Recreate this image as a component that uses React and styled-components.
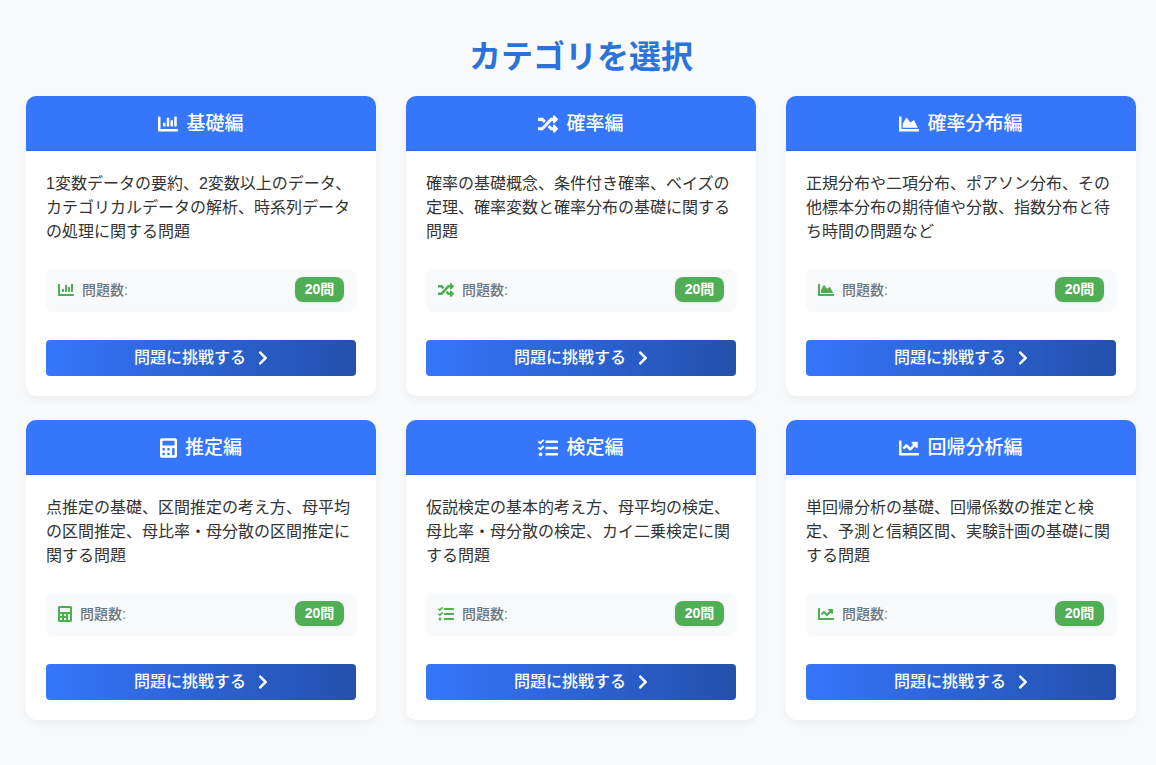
import styled, { createGlobalStyle } from 'styled-components';
import {
    FaCalculator,
    FaChartArea,
    FaChartBar,
    FaChartLine,
    FaChevronRight,
    FaRandom,
    FaTasks,
} from 'react-icons/fa';

const GlobalStyle = createGlobalStyle`
    * {
        box-sizing: border-box;
    }
    body {
        margin: 0;
        background: #f8fafc;
        color: #333;
        font-family: "Liberation Sans", "Noto Sans CJK JP", sans-serif;
        font-size: 16px;
        line-height: 24px;
    }
`;

const Page = styled.main`
    padding: 37px 20px 44px 26px;
`;

const Title = styled.h1`
    margin: 0 0 19px;
    color: #2c73d9;
    font-size: 32px;
    font-weight: 700;
    line-height: 40px;
    text-align: center;
`;

const Grid = styled.div`
    display: grid;
    grid-template-columns: repeat(3, 1fr);
    gap: 24px 30px;
    @media (max-width: 900px) {
        grid-template-columns: 1fr;
    }
`;

const Card = styled.article`
    display: flex;
    flex-direction: column;
    overflow: hidden;
    background: #fff;
    border-radius: 10px;
    box-shadow: 0 4px 8px rgba(0, 0, 0, 0.05);
`;

const CardHeader = styled.h2`
    display: flex;
    align-items: center;
    justify-content: center;
    gap: 8px;
    margin: 0;
    padding: 16px 15px 14px;
    background: #3576fb;
    border-bottom: 1px solid #2f6be6;
    color: #fff;
    font-size: 19px;
    font-weight: 500;
    line-height: 24px;

    svg {
        width: ${({ $narrow }) => ($narrow ? '17px' : '20px')};
        height: 20px;
    }
`;

const CardBody = styled.div`
    display: flex;
    flex: 1;
    flex-direction: column;
    padding: 21px 20px 20px;
`;

const Description = styled.p`
    flex: 1;
    margin: 0 0 25px;
`;

const Stat = styled.div`
    display: flex;
    align-items: center;
    justify-content: space-between;
    margin-bottom: 30px;
    padding: 8px 12px;
    background: #f8fafc;
    border-radius: 8px;
    box-shadow: 0 1px 3px rgba(0, 0, 0, 0.05);
`;

const StatLabel = styled.span`
    display: flex;
    align-items: center;
    gap: 8px;
    color: #6c757d;
    font-size: 14px;
    font-weight: 500;

    svg {
        width: ${({ $narrow }) => ($narrow ? '14px' : '16px')};
        height: 16px;
        color: #4caf50;
    }
`;

const Badge = styled.span`
    min-width: 49px;
    padding: 0 9px;
    background: #50af55;
    border-radius: 8px;
    box-shadow: 0 1px 3px rgba(0, 0, 0, 0.1);
    color: #fff;
    font-size: 14px;
    font-weight: 700;
    line-height: 25px;
    text-align: center;
`;

const StartButton = styled.button`
    display: flex;
    align-items: center;
    justify-content: center;
    gap: 12px;
    width: 100%;
    padding: 6px 12px;
    background: linear-gradient(90deg, #3576fb, #2350ab);
    border: 0;
    border-radius: 4px;
    color: #fff;
    cursor: pointer;
    font: inherit;
    font-weight: 500;

    svg {
        width: 10px;
        height: 16px;
    }
`;

const categories = [
    {
        name: '基礎編',
        icon: FaChartBar,
        text: '1変数データの要約、2変数以上のデータ、カテゴリカルデータの解析、時系列データの処理に関する問題',
    },
    {
        name: '確率編',
        icon: FaRandom,
        text: '確率の基礎概念、条件付き確率、ベイズの定理、確率変数と確率分布の基礎に関する問題',
    },
    {
        name: '確率分布編',
        icon: FaChartArea,
        text: '正規分布や二項分布、ポアソン分布、その他標本分布の期待値や分散、指数分布と待ち時間の問題など',
    },
    {
        name: '推定編',
        icon: FaCalculator,
        narrow: true,
        text: '点推定の基礎、区間推定の考え方、母平均の区間推定、母比率・母分散の区間推定に関する問題',
    },
    {
        name: '検定編',
        icon: FaTasks,
        text: '仮説検定の基本的考え方、母平均の検定、母比率・母分散の検定、カイ二乗検定に関する問題',
    },
    {
        name: '回帰分析編',
        icon: FaChartLine,
        text: '単回帰分析の基礎、回帰係数の推定と検定、予測と信頼区間、実験計画の基礎に関する問題',
    },
];

function CategoryCard({ name, icon: Icon, narrow, text }) {
    return (
        <Card>
            <CardHeader $narrow={narrow}>
                <Icon aria-hidden="true" />
                {name}
            </CardHeader>
            <CardBody>
                <Description>{text}</Description>
                <Stat>
                    <StatLabel $narrow={narrow}>
                        <Icon aria-hidden="true" />
                        問題数:
                    </StatLabel>
                    <Badge>20問</Badge>
                </Stat>
                <StartButton type="button">
                    問題に挑戦する
                    <FaChevronRight aria-hidden="true" />
                </StartButton>
            </CardBody>
        </Card>
    );
}

function App() {
    return (
        <Page lang="ja">
            <GlobalStyle />
            <Title>カテゴリを選択</Title>
            <Grid>
                {categories.map((category) => (
                    <CategoryCard key={category.name} {...category} />
                ))}
            </Grid>
        </Page>
    );
}

export default App;
